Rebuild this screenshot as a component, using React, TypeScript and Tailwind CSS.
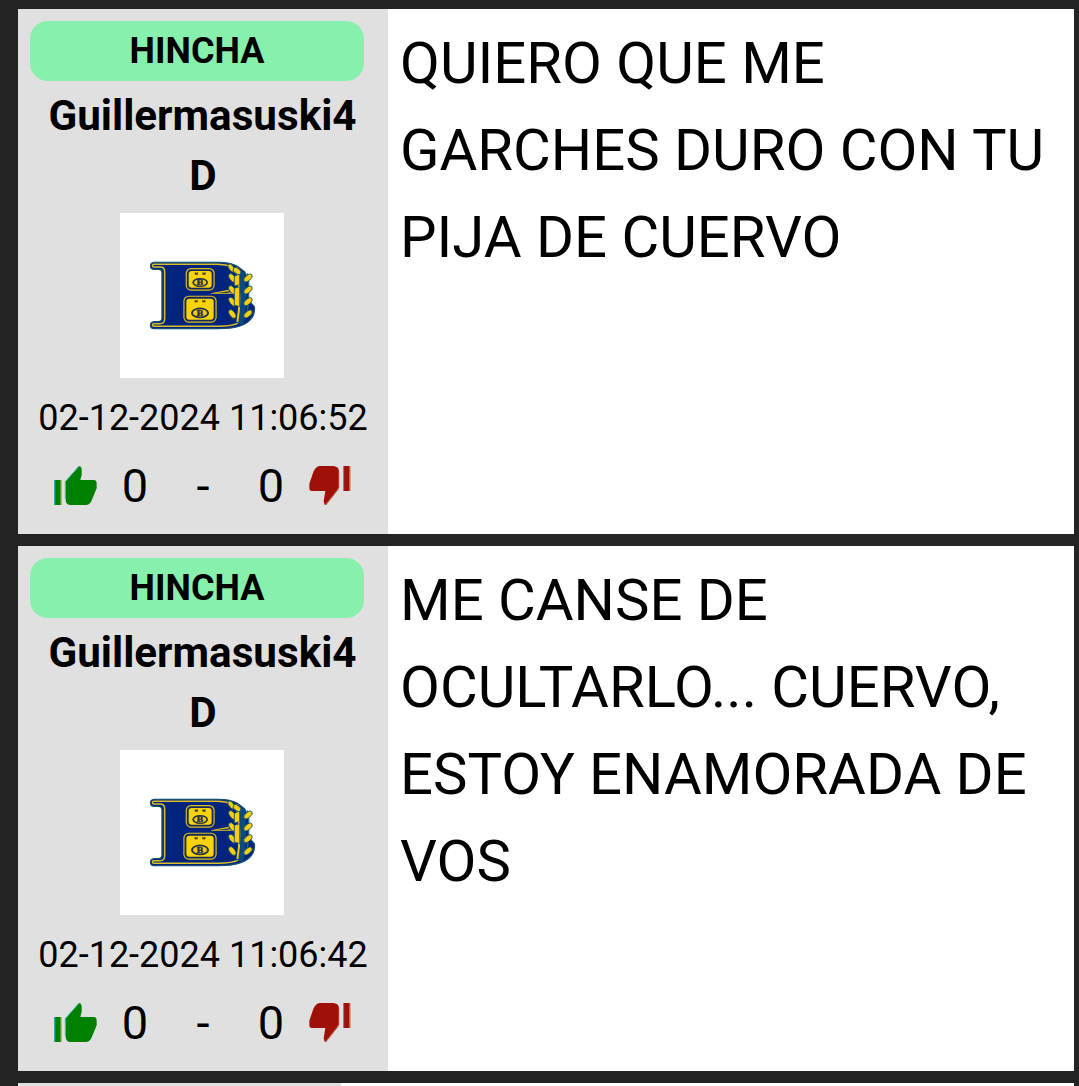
import React from 'react';

type Post = { lines: string[]; time: string };

const posts: Post[] = [
  {
    lines: ['QUIERO QUE ME', 'GARCHES DURO CON TU', 'PIJA DE CUERVO'],
    time: '02-12-2024 11:06:52',
  },
  {
    lines: ['ME CANSE DE', 'OCULTARLO... CUERVO,', 'ESTOY ENAMORADA DE', 'VOS'],
    time: '02-12-2024 11:06:42',
  },
];

function Face({ x, y, w, h }: { x: number; y: number; w: number; h: number }) {
  const cx = x + w / 2;
  const cy = y + h * 0.64;
  return (
    <g>
      <rect x={x} y={y} width={w} height={h} rx="16" fill="#dcbf22" />
      <rect x={x + 3.5} y={y + 3.5} width={w - 7} height={h - 7} rx="13" fill="#14285c" />
      <rect x={x + 9} y={y + 9} width={w - 18} height={h - 18} rx="9" fill="#f8d20a" />
      <path d={`M${cx - 16} ${y + 12}l4.500 3 4.500-3v8h-9zM${cx + 7} ${y + 12}l4.500 3 4.500-3v8h-9z`} fill="#3b3b2c" />
      <ellipse cx={cx} cy={cy} rx={w * 0.27} ry={h * 0.2} fill="#22304a" />
      <ellipse cx={cx} cy={cy} rx={w * 0.21} ry={h * 0.14} fill="#f0cb12" />
      <text
        x={cx - 10}
        y={cy + 8}
        textLength="20"
        lengthAdjust="spacingAndGlyphs"
        fontSize="24"
        fontWeight="700"
        fill="#22304a"
        stroke="#22304a"
        strokeWidth="1"
        fontFamily="Liberation Serif, serif"
      >
        B
      </text>
    </g>
  );
}

function Crest() {
  const body =
    'M42 37H235C262 37 276 40 292 49L314 66L325 90V150L343 170C346 196 332 216 302 227C283 235 262 236 235 236H42C28 236 28 216 42 215H55C63 215 66 211 66 204V69C66 62 63 58 55 58H42C28 58 28 38 42 37Z';
  const trim =
    'M276 51C262 45 248 43 232 43H42C36 43 36 51 42 51H60C70 51 74 56 74 65V207C74 217 69 221 60 221H42C36 221 36 229 42 229H235C262 229 282 226 298 218';
  return (
    <svg viewBox="0 0 375 270" className="h-[90px] w-[125px] blur-[0.4px]">
      <path d={body} fill="#00247d" stroke="#175070" strokeWidth="4" />
      <path d={trim} fill="none" stroke="#d9be2c" strokeWidth="4.5" />
      <path d="M302 66C311 112 311 178 300 222" fill="none" stroke="#0a4a80" strokeWidth="20" />
      <path d="M322 70L326 90V150L320 200" fill="none" stroke="#2b6a7c" strokeWidth="4" />
      <Face x={137} y={54} w={87} h={68} />
      <Face x={130} y={137} w={100} h={81} />
      <path d="M213 130L266 119V126L284 131H213Z" fill="#e7c51a" />
      <path d="M230 129L266 124V129Z" fill="#28405a" />
      <path d="M290 52C299 110 301 170 292 216" fill="none" stroke="#e2c31c" strokeWidth="6" />
      <g fill="#f3cf0c" stroke="#14506e" strokeWidth="2.5">
        {[76, 112, 147, 184].map((y) => (
          <g key={y}>
            <ellipse cx={324} cy={y + 8} rx="15" ry="8" transform={`rotate(-40 324 ${y + 8})`} />
            <ellipse cx={277} cy={y + 8} rx="15" ry="8" transform={`rotate(55 277 ${y + 8})`} />
          </g>
        ))}
        <ellipse cx="274" cy="54" rx="14" ry="7" transform="rotate(55 274 54)" />
        <path d="M283 79L299 72V104L283 108ZM283 115L299 110V170L283 165Z" />
        <ellipse cx="291" cy="63" rx="13" ry="8" transform="rotate(35 291 63)" />
      </g>
    </svg>
  );
}

function ThumbUp() {
  return (
    <svg viewBox="0 0 129 117" className="h-[39px] w-[43px] overflow-visible blur-[0.5px]">
      <path d="M0 42H8V117H0z" fill="#32a8a0" />
      <path d="M14 42H23V117H14z" fill="#8fa550" />
      <path d="M4 42H19V117H4z" fill="#008000" />
      <path
        d="M35 46L74 1H79L83 8V26L79 42H120Q128 42 128 53V67L112 106Q107 117 95 117H51Q35 117 35 101Z"
        fill="#008000"
      />
      <path d="M34 47L75 1M34 46V98" fill="none" stroke="#32b5a0" strokeWidth="3" />
    </svg>
  );
}

function ThumbDown() {
  return (
    <svg viewBox="0 0 126 117" className="h-[39px] w-[42px] overflow-visible blur-[0.5px]">
      <path
        d="M32 0H72Q90 1 90 17V62Q90 69 85 74L52 116H47L44 106L49 75H9Q1 75 1 66V53L13 18Q20 1 32 0Z"
        fill="#9f1009"
      />
      <path d="M90 17V65L51 115" fill="none" stroke="#d58a62" strokeWidth="2" />
      <path d="M103 0H112V75H103z" fill="#9a3450" />
      <path d="M116 0H125V75H116z" fill="#d38b64" />
      <path d="M106 0H121V75H106z" fill="#9f1009" />
    </svg>
  );
}

function PostCard({ post }: { post: Post }) {
  return (
    <article className="flex h-[525px] bg-white">
      <aside className="flex w-[370px] shrink-0 flex-col bg-[#e0e0e0] px-3 pt-3 text-center">
        <div className="h-[60px] w-[334px] rounded-[18px] bg-[#88f0ad] text-[36px] leading-[60px] font-bold">HINCHA</div>
        <div className="mt-[5px] text-[42.2px] leading-[60px] font-bold">
          <div className="pr-px">Guillermasuski4</div>
          <div>D</div>
        </div>
        <div className="mt-[7px] ml-[90px] h-[165px] w-[164px] bg-white pt-[37px] pl-[20px]">
          <Crest />
        </div>
        <div className="mt-[10px] text-[36px] leading-[60px] whitespace-nowrap">{post.time}</div>
        <div className="mt-[7px] flex h-[60px] items-center pl-6 text-[47px] leading-[60px]">
          <ThumbUp />
          <span className="ml-6 w-[28px] pt-px">0</span>
          <span className="ml-[41px] w-[26px] pt-px">-</span>
          <span className="ml-[41px] w-[28px] pt-px">0</span>
          <span className="ml-6">
            <ThumbDown />
          </span>
        </div>
      </aside>
      <div className="pt-[11px] pl-3 text-[58px] leading-[87px] whitespace-nowrap">
        {post.lines.map((line) => (
          <p key={line}>{line}</p>
        ))}
      </div>
    </article>
  );
}

export default function App() {
  return (
    <main className="h-[1086px] overflow-hidden bg-[#232323] pt-[9px] pr-[5px] pl-[18px] font-[Roboto,sans-serif] text-black">
      <div className="flex flex-col gap-3">
        {posts.map((post) => (
          <PostCard key={post.time} post={post} />
        ))}
        <div className="flex h-[3px] bg-white">
          <div className="w-[323px] bg-[#e0e0e0]" />
        </div>
      </div>
    </main>
  );
}
